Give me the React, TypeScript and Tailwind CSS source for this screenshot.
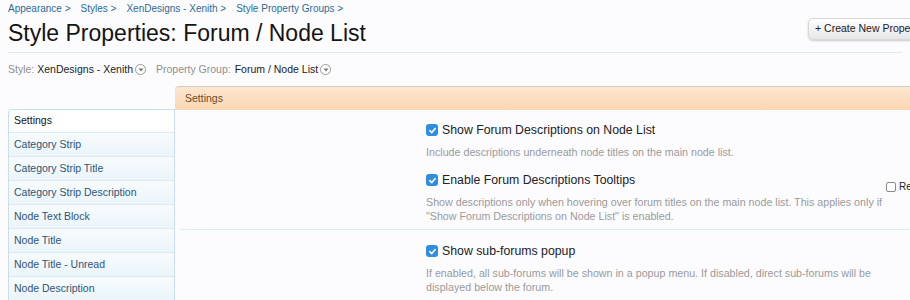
const navItems = [
  "Category Strip",
  "Category Strip Title",
  "Category Strip Description",
  "Node Text Block",
  "Node Title",
  "Node Title - Unread",
  "Node Description",
];

function Check() {
  return (
    <span className="inline-flex h-[12px] w-[12px] shrink-0 items-center justify-center rounded-[3px] bg-[#2f8ee0]">
      <svg width="9" height="9" viewBox="0 0 10 10" fill="none">
        <path d="M2 5.2 L4.2 7.3 L8 2.8" stroke="white" strokeWidth="1.8" strokeLinecap="round" strokeLinejoin="round" />
      </svg>
    </span>
  );
}

function Caret() {
  return (
    <span className="ml-[2px] inline-flex h-[11px] w-[11px] items-center justify-center rounded-full border border-[#9a9a9a] bg-white">
      <svg width="6" height="4" viewBox="0 0 6 4">
        <path d="M0.5 0.5 L3 3.5 L5.5 0.5 Z" fill="#777" />
      </svg>
    </span>
  );
}

function Option({ label, desc, top }: { label: string; desc: string[]; top: string }) {
  return (
    <div className={`${top} pl-[251px]`}>
      <div className="flex h-[18px] items-center gap-[4px] text-[12.3px] text-[#222]">
        <Check />
        <span>{label}</span>
      </div>
      <div className="mt-[6px] text-[10.7px] leading-[14px] text-[#9a9a9a]">
        {desc.map((d) => (
          <div key={d}>{d}</div>
        ))}
      </div>
    </div>
  );
}

export default function App() {
  return (
    <div className="h-[300px] w-[910px] overflow-hidden bg-[#fcfcfe] font-['Liberation_Sans',Arial,sans-serif]">
      <div className="px-[8px]">
        <div className="flex h-[15px] items-center gap-[10px] pt-[1px] text-[10px] text-[#2d6a92]">
          <span>Appearance &gt;</span>
          <span>Styles &gt;</span>
          <span>XenDesigns - Xenith &gt;</span>
          <span>Style Property Groups &gt;</span>
        </div>
        <div className="flex items-start justify-between border-b border-[#dcecf1] pb-[4px]">
          <h1 className="mt-[4px] text-[23px] leading-[29px] text-[#141414]">Style Properties: Forum / Node List</h1>
          <div className="mr-[-66px] mt-[3px] flex h-[22px] w-[160px] items-center rounded-[5px] border border-[#d8d8d8] bg-gradient-to-b from-[#ffffff] to-[#e6e6e8] px-[6px] text-[10.5px] text-[#222] shadow-[0_1px_2px_rgba(0,0,0,0.2)]">
            + Create New Property
          </div>
        </div>
        <div className="flex h-[33px] items-center text-[10.5px] text-[#8f8f8f]">
          <span>Style:</span>
          <span className="ml-[3px] text-[#222]">XenDesigns - Xenith</span>
          <Caret />
          <span className="ml-[10px]">Property Group:</span>
          <span className="ml-[4px] text-[#222]">Forum / Node List</span>
          <Caret />
        </div>
      </div>
      <div className="flex pl-[8px]">
        <div className="mt-[23px] w-[167px] shrink-0 overflow-hidden rounded-tl-[4px] border-l border-t border-r border-[#c6dfe8] text-[10.5px]">
          <div className="flex h-[23px] items-center border-b border-[#dcecf1] bg-white px-[5px] text-[#111]">Settings</div>
          {navItems.map((item) => (
            <div
              key={item}
              className="flex h-[24px] items-center border-b border-[#d9ebf2] bg-gradient-to-b from-[#f7fbfd] to-[#ebf5fa] px-[5px] text-[#2b5674]"
            >
              {item}
            </div>
          ))}
        </div>
        <div className="flex-1">
          <div className="flex h-[24px] items-center rounded-tl-[4px] border-t border-[#d6cfc4] bg-gradient-to-b from-[#fde6cf] to-[#fbd6b2] px-[10px] text-[10.5px] text-[#6a4a2a]">
            Settings
          </div>
          <div className="relative">
            <Option
              top="pt-[11px]"
              label="Show Forum Descriptions on Node List"
              desc={["Include descriptions underneath node titles on the main node list."]}
            />
            <Option
              top="pt-[12px]"
              label="Enable Forum Descriptions Tooltips"
              desc={[
                "Show descriptions only when hovering over forum titles on the main node list. This applies only if",
                "\"Show Forum Descriptions on Node List\" is enabled.",
              ]}
            />
            <div className="absolute left-[711px] top-[69px] flex items-center gap-[3px] whitespace-nowrap text-[10px] text-[#222]">
              <span className="h-[10px] w-[10px] rounded-[2px] border border-[#8a8a8a] bg-white" />
              <span>Reset</span>
            </div>
            <div className="ml-[5px] mt-[6px] border-t border-[#dcecf1]" />
            <Option
              top="pt-[12px]"
              label="Show sub-forums popup"
              desc={[
                "If enabled, all sub-forums will be shown in a popup menu. If disabled, direct sub-forums will be",
                "displayed below the forum.",
              ]}
            />
          </div>
        </div>
      </div>
    </div>
  );
}
